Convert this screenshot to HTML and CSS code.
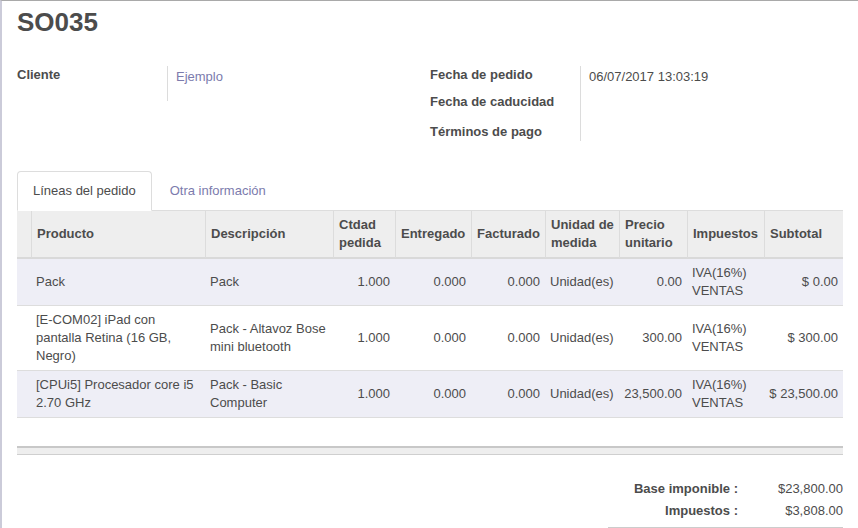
FILE: index.html
```html
<!DOCTYPE html>
<html lang="es">
<head>
<meta charset="utf-8">
<title>SO035</title>
<link rel="stylesheet" href="styles.css">
</head>
<body>
<div class="sheet">
  <h1 class="title">SO035</h1>

  <div class="groups">
    <div class="group group-left">
      <div class="label">Cliente</div>
      <div class="value"><a class="link" href="#">Ejemplo</a></div>
    </div>
    <div class="group group-right">
      <div class="label">Fecha de pedido</div>
      <div class="value">06/07/2017 13:03:19</div>
      <div class="label">Fecha de caducidad</div>
      <div class="value"></div>
      <div class="label">Términos de pago</div>
      <div class="value"></div>
    </div>
  </div>

  <ul class="tabs">
    <li class="tab active"><a href="#">Líneas del pedido</a></li>
    <li class="tab"><a href="#">Otra información</a></li>
  </ul>

  <table class="lines">
    <colgroup>
      <col class="c-handle">
      <col class="c-prod">
      <col class="c-desc">
      <col class="c-qty">
      <col class="c-del">
      <col class="c-inv">
      <col class="c-uom">
      <col class="c-price">
      <col class="c-tax">
      <col class="c-sub">
    </colgroup>
    <thead>
      <tr>
        <th></th>
        <th>Producto</th>
        <th>Descripción</th>
        <th>Ctdad pedida</th>
        <th>Entregado</th>
        <th>Facturado</th>
        <th>Unidad de medida</th>
        <th>Precio unitario</th>
        <th>Impuestos</th>
        <th>Subtotal</th>
      </tr>
    </thead>
    <tbody>
      <tr>
        <td></td>
        <td>Pack</td>
        <td>Pack</td>
        <td class="num">1.000</td>
        <td class="num">0.000</td>
        <td class="num">0.000</td>
        <td>Unidad(es)</td>
        <td class="num">0.00</td>
        <td>IVA(16%) VENTAS</td>
        <td class="num">$ 0.00</td>
      </tr>
      <tr>
        <td></td>
        <td>[E-COM02] iPad con pantalla Retina (16 GB, Negro)</td>
        <td>Pack - Altavoz Bose mini bluetooth</td>
        <td class="num">1.000</td>
        <td class="num">0.000</td>
        <td class="num">0.000</td>
        <td>Unidad(es)</td>
        <td class="num">300.00</td>
        <td>IVA(16%) VENTAS</td>
        <td class="num">$ 300.00</td>
      </tr>
      <tr>
        <td></td>
        <td>[CPUi5] Procesador core i5 2.70 GHz</td>
        <td>Pack - Basic Computer</td>
        <td class="num">1.000</td>
        <td class="num">0.000</td>
        <td class="num">0.000</td>
        <td>Unidad(es)</td>
        <td class="num">23,500.00</td>
        <td>IVA(16%) VENTAS</td>
        <td class="num">$ 23,500.00</td>
      </tr>
      <tr class="empty">
        <td colspan="10">&nbsp;</td>
      </tr>
    </tbody>
    <tfoot>
      <tr><td colspan="10"></td></tr>
    </tfoot>
  </table>

  <div class="totals">
    <div class="t-label">Base imponible :</div>
    <div class="t-value">$23,800.00</div>
    <div class="t-label">Impuestos :</div>
    <div class="t-value">$3,808.00</div>
    <div class="t-rule"></div>
  </div>
</div>
</body>
</html>
```

FILE: styles.css
```css
html, body {
  margin: 0;
  padding: 0;
  background: #ffffff;
}

body {
  font-family: "Liberation Sans", Arial, sans-serif;
  font-size: 13px;
  line-height: 18px;
  color: #4c4c4c;
}

.sheet {
  border-top: 1px solid #a9a9a9;
  border-left: 2px solid #cbcbd9;
  padding: 7px 15px 0 15px;
  min-height: 100vh;
  box-sizing: border-box;
}

.title {
  margin: 0;
  font-size: 26px;
  line-height: 28px;
  font-weight: bold;
  color: #4c4c4c;
}

.groups {
  margin-top: 30px;
  display: grid;
  grid-template-columns: 1fr 1fr;
}

.group {
  display: grid;
  grid-template-columns: 150px 1fr;
  align-content: start;
}

.group-left {
  grid-template-rows: 35px;
}

.group-right {
  grid-template-rows: 27px 30px 18px;
}

.label {
  font-weight: bold;
}

.value {
  border-left: 1px solid #dcdcdc;
  padding-left: 8px;
  padding-top: 2px;
}

.link {
  color: #7c7bad;
  text-decoration: none;
}

.tabs {
  list-style: none;
  margin: 30px 0 0 0;
  padding: 0;
  display: flex;
  border-bottom: 1px solid #dddddd;
}

.tab {
  margin-bottom: -1px;
  margin-right: 2px;
}

.tab a {
  display: block;
  padding: 10px 15px;
  border: 1px solid transparent;
  border-radius: 4px 4px 0 0;
  color: #7c7bad;
  text-decoration: none;
}

.tab.active a {
  color: #4c4c4c;
  background: #ffffff;
  border-color: #dddddd #dddddd transparent #dddddd;
}

.lines {
  width: 100%;
  table-layout: fixed;
  border-collapse: separate;
  border-spacing: 0;
}

.c-handle { width: 14px; }
.c-prod { width: 174px; }
.c-desc { width: 128px; }
.c-qty { width: 62px; }
.c-del { width: 76px; }
.c-inv { width: 74px; }
.c-uom { width: 74px; }
.c-price { width: 68px; }
.c-tax { width: 77px; }
.c-sub { width: 79px; }

.lines th {
  background: #eeeeee;
  font-weight: bold;
  text-align: left;
  vertical-align: middle;
  padding: 5px;
  border-bottom: 2px solid #d9d9d9;
  border-left: 1px solid #dcdcdc;
}

.lines th:first-child {
  border-left: none;
}

.lines td {
  padding: 5px;
  vertical-align: middle;
}

.lines tbody tr + tr td {
  border-top: 1px solid #dddddd;
}

.lines tbody tr:nth-child(odd) {
  background: #eeeef6;
}

.lines tbody tr.empty {
  background: #ffffff;
}

.lines td.num {
  text-align: right;
  white-space: nowrap;
}

.lines tfoot td {
  padding: 0;
  height: 6px;
  background: #eeeeee;
  border-top: 2px solid #c8c8c8;
  border-bottom: 1px solid #cfcfcf;
}

.totals {
  margin: 23px 0 0 auto;
  width: 235px;
  display: grid;
  grid-template-columns: 1fr 100px;
}

.t-label {
  font-weight: bold;
  text-align: right;
  padding: 2px 5px 2px 0;
}

.t-value {
  text-align: right;
  padding: 2px 0;
}

.t-rule {
  grid-column: 1 / -1;
  margin-top: 5px;
  border-top: 1px solid #cccccc;
  height: 10px;
}
```
